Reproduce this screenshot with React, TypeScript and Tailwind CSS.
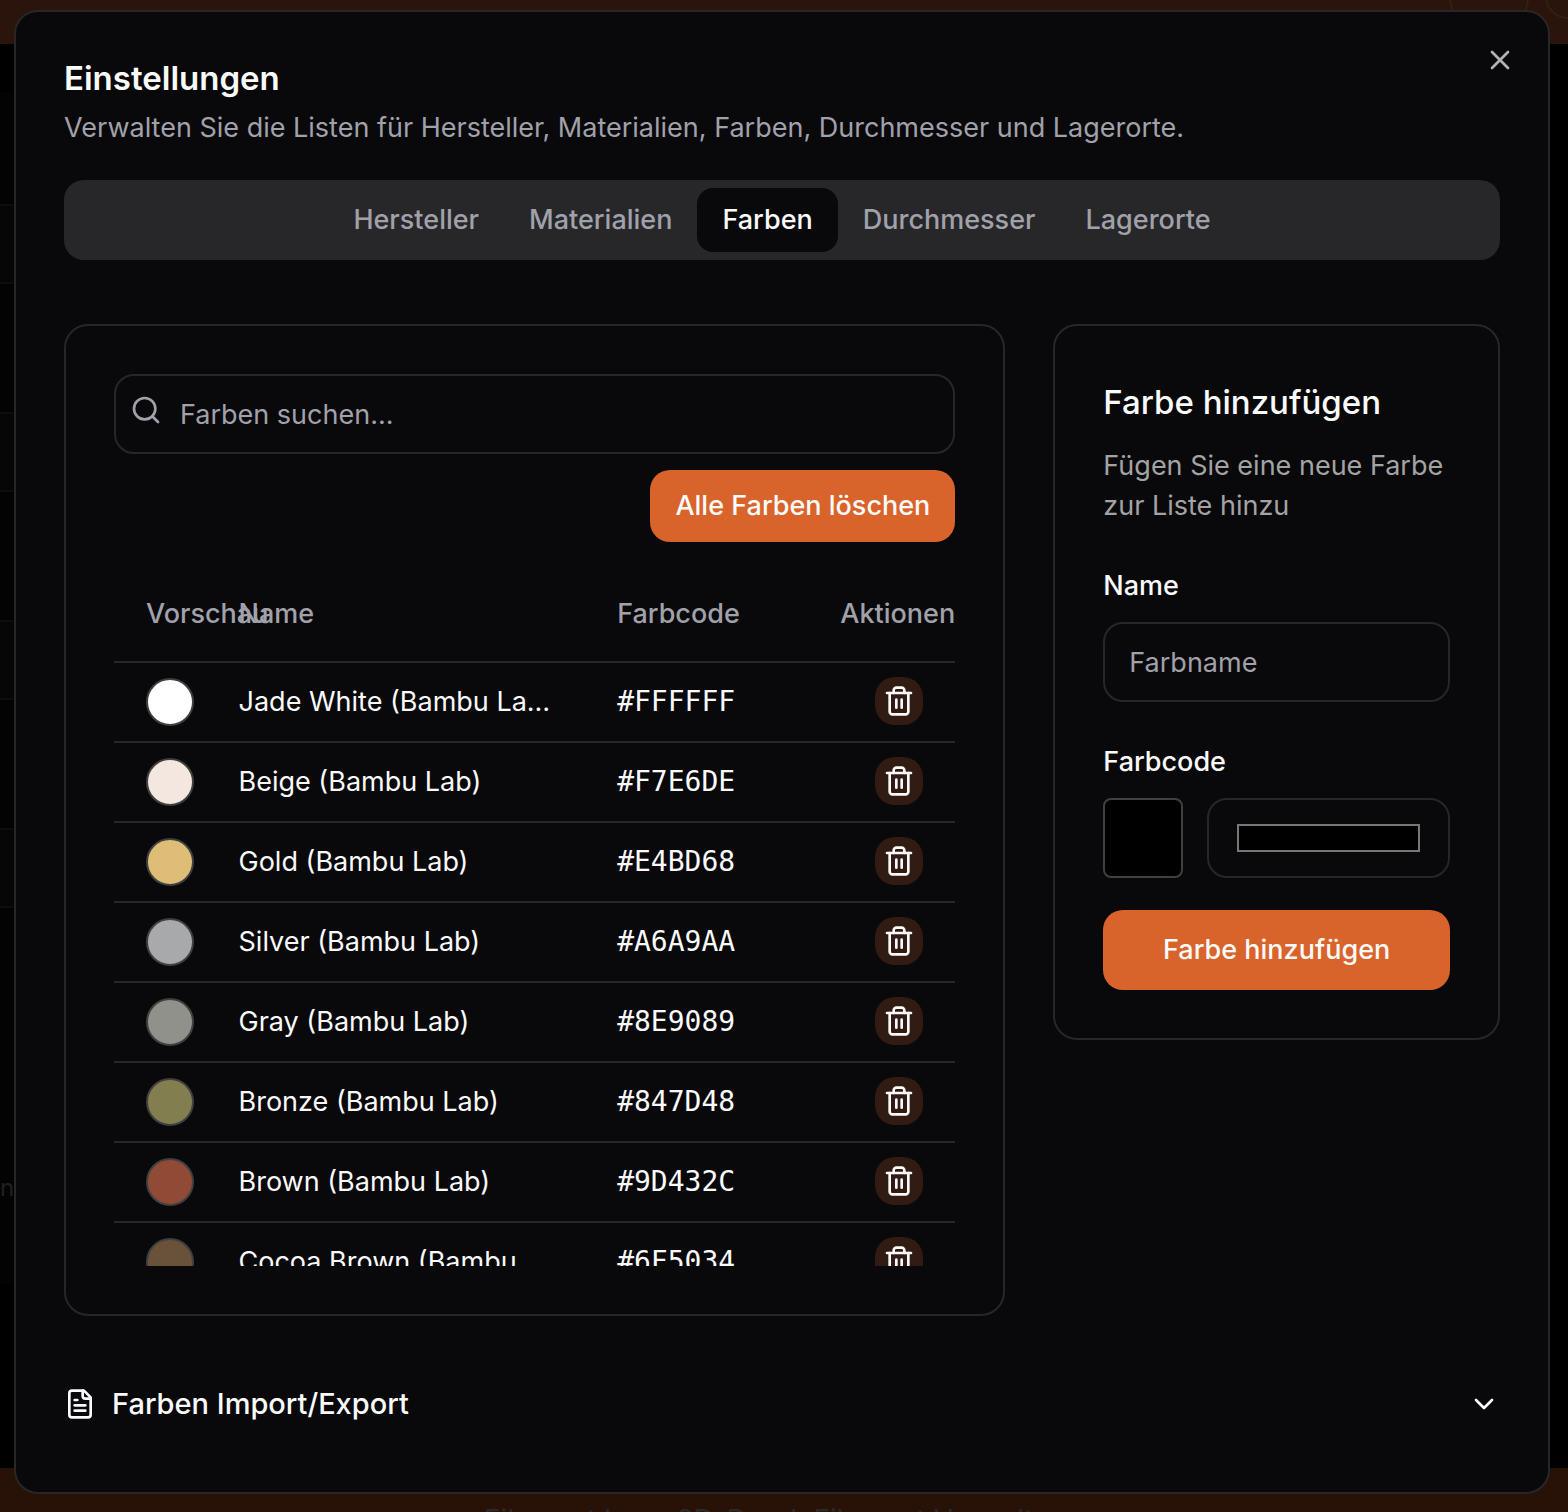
import { useState } from "react";
import type { ReactNode } from "react";

const tabs = ["Hersteller", "Materialien", "Farben", "Durchmesser", "Lagerorte"];

const colors = [
  { name: "Jade White (Bambu Lab)", code: "#FFFFFF", swatch: "#ffffff" },
  { name: "Beige (Bambu Lab)", code: "#F7E6DE", swatch: "#f3e7df" },
  { name: "Gold (Bambu Lab)", code: "#E4BD68", swatch: "#debe76" },
  { name: "Silver (Bambu Lab)", code: "#A6A9AA", swatch: "#a7a9aa" },
  { name: "Gray (Bambu Lab)", code: "#8E9089", swatch: "#8f918a" },
  { name: "Bronze (Bambu Lab)", code: "#847D48", swatch: "#837e4f" },
  { name: "Brown (Bambu Lab)", code: "#9D432C", swatch: "#914a35" },
  { name: "Cocoa Brown (Bambu Lab)", code: "#6F5034", swatch: "#6a5139" },
];

function Icon({ children, className = "" }: { children: ReactNode; className?: string }) {
  return (
    <svg
      viewBox="0 0 24 24"
      fill="none"
      stroke="currentColor"
      strokeWidth="2"
      strokeLinecap="round"
      strokeLinejoin="round"
      aria-hidden="true"
      className={`size-8 shrink-0 ${className}`}
    >
      {children}
    </svg>
  );
}

/* The dimmed application behind the dialog */
function Backdrop() {
  return (
    <div aria-hidden="true" className="absolute inset-0 flex flex-col overflow-hidden bg-black">
      <div className="flex h-11 shrink-0 justify-end bg-[#2b140b]">
        <svg viewBox="0 0 128 44" fill="none" stroke="#33200f" strokeWidth="2" className="h-11 w-32">
          <circle cx="49" cy="-4" r="39" />
          <circle cx="128" cy="-4" r="22" />
        </svg>
      </div>
      <div className="grow">
        <div className="mt-12 flex h-[1192px] w-[14px] flex-col bg-[#030303] pt-28">
          {[0, 1, 2, 3].map((i) => (
            <div key={i} className="mb-32 h-20 shrink-0 border-y-2 border-[#0d0d0d] bg-[#060606]" />
          ))}
          <span className="mt-[136px] text-2xl text-[#202020]">n</span>
        </div>
      </div>
      <div className="h-11 shrink-0 bg-[#281208] pt-8 text-center text-[28px] leading-10 whitespace-nowrap text-[#2c2a29]">
        Filament base 3D-Druck Filament Verwaltung
      </div>
    </div>
  );
}

function ColorTable() {
  return (
    <div className="mt-6 max-h-[700px] overflow-hidden">
      <table className="w-full table-fixed">
        <thead>
          <tr className="h-24 border-b-2 border-[#27272a] text-left text-[#a1a1aa]">
            <th className="w-[11%] pl-8 font-medium whitespace-nowrap">Vorschau</th>
            <th className="w-[45%] px-8 font-medium">Name</th>
            <th className="px-8 font-medium">Farbcode</th>
            <th className="w-[147px] pl-8 font-medium whitespace-nowrap">Aktionen</th>
          </tr>
        </thead>
        <tbody>
          {colors.map((color) => (
            <tr key={color.code} className="h-20 border-b-2 border-[#27272a]">
              <td className="pl-8">
                <div
                  className="size-12 rounded-full border-2 border-[#404040]"
                  style={{ backgroundColor: color.swatch }}
                />
              </td>
              <td className="truncate pr-[34px] pl-8">{color.name}</td>
              <td className="px-8 font-['DejaVu_Sans_Mono',monospace] text-[28px]">{color.code}</td>
              <td className="pr-8 pb-0.5">
                <button
                  type="button"
                  aria-label={`${color.name} löschen`}
                  className="ml-auto flex size-12 items-center justify-center rounded-[20px] bg-[#321b13]"
                >
                  <Icon>
                    <path d="M3 6h18" />
                    <path d="M19 6v14c0 1-1 2-2 2H7c-1 0-2-1-2-2V6" />
                    <path d="M8 6V4c0-1 1-2 2-2h4c1 0 2 1 2 2v2" />
                    <path d="M10 11v6" />
                    <path d="M14 11v6" />
                  </Icon>
                </button>
              </td>
            </tr>
          ))}
        </tbody>
      </table>
    </div>
  );
}

function AddColorForm() {
  const [value, setValue] = useState("#000000");
  return (
    <form
      onSubmit={(e) => e.preventDefault()}
      className="flex flex-col self-start rounded-3xl border-2 border-[#27272a] p-12"
    >
      <h3 className="text-[33px] leading-[56px] font-medium whitespace-nowrap">Farbe hinzufügen</h3>
      <p className="mt-4 text-[#a3a3a3]">Fügen Sie eine neue Farbe zur Liste hinzu</p>
      <label htmlFor="color-name" className="mt-10 font-medium">
        Name
      </label>
      <input
        id="color-name"
        type="text"
        placeholder="Farbname"
        className="mt-4 h-20 w-full rounded-[20px] border-2 border-[#27272a] bg-transparent px-6 placeholder:text-[#a1a1aa]"
      />
      <label htmlFor="color-code" className="mt-10 font-medium">
        Farbcode
      </label>
      <div className="mt-4 flex gap-6">
        <div
          className="size-20 shrink-0 rounded-lg border-2 border-[#404040]"
          style={{ backgroundColor: value }}
        />
        <input
          id="color-code"
          type="color"
          value={value}
          onChange={(e) => setValue(e.target.value)}
          className="h-20 min-w-0 grow appearance-none rounded-[20px] border-2 border-[#27272a] bg-transparent px-6 py-4 [&::-webkit-color-swatch]:border-2 [&::-webkit-color-swatch]:border-[#777777] [&::-webkit-color-swatch-wrapper]:px-1 [&::-webkit-color-swatch-wrapper]:py-2"
        />
      </div>
      <button type="submit" className="mt-8 h-20 rounded-[20px] bg-[#d9642b] font-medium">
        Farbe hinzufügen
      </button>
    </form>
  );
}

export default function App() {
  const [active, setActive] = useState("Farben");
  return (
    <div className="relative min-h-screen overflow-hidden bg-black font-['Inter',sans-serif] text-[27px] leading-10 text-[#fafafa]">
      <Backdrop />
      <div
        role="dialog"
        aria-labelledby="settings-title"
        className="relative mt-[10px] mr-[18px] mb-[18px] ml-[14px] rounded-3xl border-2 border-[#27272a] bg-[#09090b] p-12"
      >
        <button
          type="button"
          aria-label="Schließen"
          className="absolute top-8 right-8 text-[#fafafa] opacity-70"
        >
          <Icon>
            <path d="M18 6 6 18" />
            <path d="m6 6 12 12" />
          </Icon>
        </button>

        <h2 id="settings-title" className="text-[33px] leading-9 font-semibold">
          Einstellungen
        </h2>
        <p className="mt-3 text-[#a1a1aa]">
          Verwalten Sie die Listen für Hersteller, Materialien, Farben, Durchmesser und Lagerorte.
        </p>

        <div role="tablist" className="mt-8 flex justify-center rounded-[20px] bg-[#27272a] p-2">
          {tabs.map((tab) => (
            <button
              key={tab}
              type="button"
              role="tab"
              aria-selected={tab === active}
              onClick={() => setActive(tab)}
              className={
                tab === active
                  ? "h-16 rounded-2xl bg-[#09090b] px-[25px] font-medium"
                  : "h-16 rounded-2xl px-[25px] font-medium text-[#a1a1aa]"
              }
            >
              {tab}
            </button>
          ))}
        </div>

        <div className="mt-16 grid grid-cols-3 gap-12">
          <section className="col-span-2 flex flex-col rounded-3xl border-2 border-[#27272a] p-12">
            <div className="relative">
              <Icon className="absolute top-5 left-4 text-[#a1a1aa]">
                <circle cx="11" cy="11" r="8" />
                <path d="m21 21-4.3-4.3" />
              </Icon>
              <input
                type="search"
                aria-label="Farben suchen"
                placeholder="Farben suchen..."
                className="block h-20 w-full rounded-[20px] border-2 border-[#27272a] bg-transparent pr-6 pl-16 placeholder:text-[#a1a1aa]"
              />
            </div>
            <button
              type="button"
              className="mt-4 h-[72px] self-end rounded-[20px] bg-[#d9642b] px-[25px] font-medium"
            >
              Alle Farben löschen
            </button>
            <ColorTable />
          </section>
          <AddColorForm />
        </div>

        <button type="button" className="mt-12 flex h-20 w-full items-center gap-4 text-left">
          <Icon>
            <path d="M15 2H6a2 2 0 0 0-2 2v16a2 2 0 0 0 2 2h12a2 2 0 0 0 2-2V7Z" />
            <path d="M14 2v4a2 2 0 0 0 2 2h4" />
            <path d="M10 9H8" />
            <path d="M16 13H8" />
            <path d="M16 17H8" />
          </Icon>
          <span className="grow text-[29px] font-medium">Farben Import/Export</span>
          <Icon>
            <path d="m6 9 6 6 6-6" />
          </Icon>
        </button>
      </div>
    </div>
  );
}
